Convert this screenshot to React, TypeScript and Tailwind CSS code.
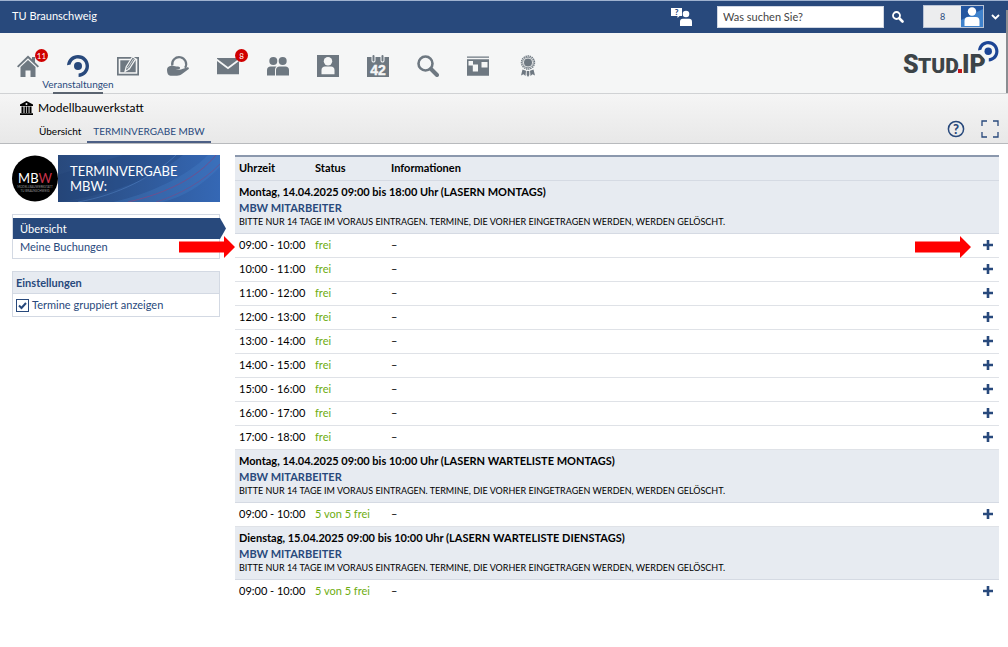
import { Fragment, type ReactNode } from "react";

const SLOTS_MONDAY = [
  "09:00 - 10:00",
  "10:00 - 11:00",
  "11:00 - 12:00",
  "12:00 - 13:00",
  "13:00 - 14:00",
  "14:00 - 15:00",
  "15:00 - 16:00",
  "16:00 - 17:00",
  "17:00 - 18:00",
];

const NOTE =
  "BITTE NUR 14 TAGE IM VORAUS EINTRAGEN. TERMINE, DIE VORHER EINGETRAGEN WERDEN, WERDEN GELÖSCHT.";

const GROUPS = [
  {
    title: "Montag, 14.04.2025 09:00 bis 18:00 Uhr (LASERN MONTAGS)",
    status: "frei",
    slots: SLOTS_MONDAY,
  },
  {
    title: "Montag, 14.04.2025 09:00 bis 10:00 Uhr (LASERN WARTELISTE MONTAGS)",
    status: "5 von 5 frei",
    slots: ["09:00 - 10:00"],
  },
  {
    title:
      "Dienstag, 15.04.2025 09:00 bis 10:00 Uhr (LASERN WARTELISTE DIENSTAGS)",
    status: "5 von 5 frei",
    slots: ["09:00 - 10:00"],
  },
];

const Icon = ({ children }: { children: ReactNode }) => (
  <svg
    viewBox="0 0 22 22"
    className="size-[22px]"
    fill="currentColor"
    aria-hidden="true"
  >
    {children}
  </svg>
);

const Swirl = () => (
  <>
    <circle cx="11" cy="11" r="4" />
    <path d="M0 10.2C.6 4 5.2 0 11 0c6.200 0 11 4.900 11 11 0 6.200-4.500 10.600-10.400 11v-3.400c4-.5 7-3.500 7-7.600 0-4.300-3.300-7.600-7.600-7.600-3.800 0-6.600 2.500-7.400 6.100z" />
  </>
);

const NAV_ITEMS: {
  label: string;
  icon: ReactNode;
  badge?: string;
  active?: boolean;
}[] = [
  {
    label: "Start",
    badge: "11",
    icon: (
      <>
        <path d="M11 .5 15 4.300V2h3v5.200l4 4-1.300 1.300L11 3.300 1.300 12.500 0 11.200z" />
        <path d="M11 5 18.500 12v10h-5v-6.500h-5V22h-5V12z" />
      </>
    ),
  },
  { label: "Veranstaltungen", active: true, icon: <Swirl /> },
  {
    label: "Inhalte",
    icon: (
      <>
        <path d="M0 2h22v18.500H0zm1.700 1.700v15.100h18.600V3.700z" fillRule="evenodd" />
        <path d="M3.300 5.300h15.400v11.900H3.300z" />
        <path
          d="M8 16.500 9.200 11.800 15.500 1.800l3.200 2.100-6.300 10z"
          stroke="#f5f6f6"
          strokeWidth="1.200"
        />
        <path d="m9.500 12 3 2M11 12.500l5.500-8.500" stroke="#f5f6f6" strokeWidth=".7" fill="none" />
      </>
    ),
  },
  {
    label: "Kurse",
    icon: (
      <>
        <path
          d="M5.300 10.500a7 7 0 1 1 12.800 2.300"
          fill="none"
          stroke="currentColor"
          strokeWidth="2.200"
        />
        <path d="M0 15c0-3 2.500-4.300 5.500-4.300 2.300 0 3 .8 5.500.9 2 .1 2.500 1.400 1.700 2.200-.7.600-2 .5-4.200.4 3 .9 5.500.4 7.500-.5l4-1.300c1.300-.3 2.300.6 1.700 1.700L15 19c-1.500 1.200-3 1.700-5 1.700H3.500C1.300 20.700 0 18.500 0 15z" />
      </>
    ),
  },
  {
    label: "Nachrichten",
    badge: "8",
    icon: (
      <>
        <path d="M0 3h22v.8L11 12 0 3.800z" />
        <path d="m0 6 11 8.200L22 6v13.300H0z" />
      </>
    ),
  },
  {
    label: "Community",
    icon: (
      <>
        <circle cx="6.300" cy="6" r="4" />
        <circle cx="15.700" cy="6" r="4" />
        <path d="M0 20.500v-5.500C0 13 1.500 11.500 3.500 11.500h6c-1 1-1.500 2-1.500 3.500v5.500zM9 20.500v-5.500c0-2 1.500-3.500 3.500-3.500h6c2 0 3.500 1.500 3.500 3.500v5.500z" />
      </>
    ),
  },
  {
    label: "Profil",
    icon: (
      <>
        <path d="M0 0h22v22H0z" />
        <circle cx="11" cy="6.300" r="4.200" fill="#f5f6f6" />
        <path
          d="M4.500 19.300v-4.300c0-2.200 1.500-3.500 3.500-3.500h6c2 0 3.500 1.300 3.500 3.500v4.300z"
          fill="#f5f6f6"
        />
      </>
    ),
  },
  {
    label: "Planer",
    icon: (
      <>
        <path d="M0 2h4.500v3.500c0 2.700 4 2.700 4 0V2h5v3.500c0 2.700 4 2.700 4 0V2H22v20H0z" />
        <path
          d="M6.500 1v4.500M15.500 1v4.500"
          stroke="currentColor"
          strokeWidth="2"
          strokeLinecap="round"
        />
        <text
          x="11"
          y="19.500"
          textAnchor="middle"
          fill="#f5f6f6"
          stroke="#f5f6f6"
          strokeWidth=".4"
          className="font-['Liberation_Sans',sans-serif] text-[14px] font-bold"
        >
          42
        </text>
      </>
    ),
  },
  {
    label: "Suche",
    icon: (
      <>
        <circle
          cx="8.500"
          cy="8.500"
          r="7"
          fill="none"
          stroke="currentColor"
          strokeWidth="2.600"
        />
        <path
          d="m14 14 6 6"
          stroke="currentColor"
          strokeWidth="4"
          strokeLinecap="round"
        />
      </>
    ),
  },
  {
    label: "Tools",
    icon: (
      <>
        <path d="M0 1.600h22v1.200H0zM0 4.300h22v16.400H0z" />
        <path
          d="M1.500 6H6v3.500h5v7H5.800v-6H1.500zM14.500 7h6v5.500h-6z"
          fill="#f5f6f6"
        />
      </>
    ),
  },
  {
    label: "Badges",
    icon: (
      <>
        <circle
          cx="11"
          cy="7.500"
          r="6.500"
          fill="none"
          stroke="currentColor"
          strokeWidth="1.400"
          strokeDasharray="1.400 .7"
        />
        <circle cx="11" cy="7.500" r="5.300" fill="none" stroke="currentColor" strokeWidth=".8" />
        <circle cx="11" cy="7.500" r="4" />
        <path d="m5.500 14.500 3.500 1.300L8.500 21l-2-1.800L4 20.500zM16.500 14.500 13 15.800l.5 5.200 2-1.800 2.500 1.300zM9.700 16h2.600v4L11 22l-1.300-2z" />
      </>
    ),
  },
];

const TopBar = () => (
  <div className="flex h-[33px] items-center border-t border-[#9fb2cf] bg-[#28497c] pr-2 pb-px pl-3 text-white">
    <span className="text-[11px]">TU Braunschweig</span>
    <button type="button" aria-label="Hilfe" className="mr-6 ml-auto">
      <svg viewBox="0 0 22 18" className="h-[18px] w-[22px] overflow-visible" fill="white">
        <path d="M0 0h11v8H8.500l-2 2V8H0z" />
        <text
          x="5.500"
          y="7"
          textAnchor="middle"
          fill="#28497c"
          className="text-[8px] font-black"
        >
          ?
        </text>
        <circle cx="15" cy="6" r="3.300" />
        <path d="M9 18v-4.500c0-1.700 1-2.800 2.800-2.800h6.400c1.800 0 2.800 1.100 2.800 2.800V18z" />
      </svg>
    </button>
    <input
      type="search"
      aria-label="Suche"
      placeholder="Was suchen Sie?"
      className="h-[22px] w-[167px] border border-[#d0d7e3] bg-white px-[5px] text-[11px] text-black placeholder:text-[#444]"
    />
    <button type="button" aria-label="Suchen" className="ml-2">
      <svg viewBox="0 0 12 12" className="size-3" fill="none" stroke="white">
        <circle cx="4.500" cy="4.500" r="3.500" strokeWidth="1.800" />
        <path d="m7.500 7.500 3 3" strokeWidth="2.600" strokeLinecap="round" />
      </svg>
    </button>
    <div className="ml-[19px] flex h-[23px] border border-[#b9c3d5]">
      <button
        type="button"
        className="w-[37px] bg-[#ecedee] text-[9px] text-[#28497c]"
      >
        8
      </button>
      <svg viewBox="0 0 22 21" className="h-[21px] w-[22px]">
        <path d="M0 0h22v21H0z" fill="#2456a0" />
        <path d="M0 14 22 3v18H0z" fill="#3f82cc" />
        <circle cx="11" cy="5.500" r="4.200" fill="white" />
        <path
          d="M3.500 20v-5c0-2.500 1.300-4 3.500-4h8c2.200 0 3.500 1.500 3.500 4v5z"
          fill="white"
        />
      </svg>
    </div>
    <button type="button" aria-label="Profilmenü" className="ml-[7px]">
      <svg viewBox="0 0 9 6" className="h-[6px] w-[9px]" fill="none">
        <path d="m1 1 3.500 3.500L8 1" stroke="white" strokeWidth="1.800" />
      </svg>
    </button>
  </div>
);

const Logo = () => (
  <svg
    viewBox="0 0 96 36"
    className="h-9 w-24 overflow-visible"
    role="img"
    aria-label="Stud.IP"
  >
    <g
      fill="#3c4448"
      className="font-[Roboto,sans-serif] text-[25px] font-black"
    >
      <text x="-1" y="33">
        S
      </text>
      <text x="14" y="33" className="text-[21px]">
        TUD
      </text>
      <text x="58" y="33">
        IP
      </text>
    </g>
    <path d="M54 29h4v4h-4z" fill="#c4161c" />
    <g fill="#1c4595" transform="translate(74 1) scale(.93)">
      <path d="M0 10.2C.6 4 5.200 0 11 0v22z" fill="#f5f6f6" stroke="#f5f6f6" strokeWidth="2" />
      <Swirl />
    </g>
  </svg>
);

const MainNav = () => (
  <div className="flex h-[61px] justify-between border-b border-[#d0d2d4] bg-[#f5f6f6] pr-2 pl-[3px]">
    <nav className="flex">
      {NAV_ITEMS.map(({ label, icon, badge, active }) => (
        <a
          key={label}
          href="#"
          aria-label={label}
          className={
            active
              ? "relative flex h-[61px] w-[50px] flex-col items-center border-b-2 border-[#5b6470] pt-[22px] text-[#28497c]"
              : "relative flex h-[61px] w-[50px] flex-col items-center pt-[22px] text-[#6e7881]"
          }
        >
          <Icon>{icon}</Icon>
          {active && (
            <span className="text-[10px] leading-[15px] whitespace-nowrap">
              {label}
            </span>
          )}
          {badge && (
            <span className="absolute top-4 left-8 flex size-[13px] items-center justify-center rounded-full bg-[#d00000] text-[8px] text-white">
              {badge}
            </span>
          )}
        </a>
      ))}
    </nav>
    <div className="pt-[7px]">
      <Logo />
    </div>
  </div>
);

const ContextBar = () => (
  <div className="flex h-[50px] items-end justify-between border-b border-[#b8babd] bg-linear-to-b from-[#f5f5f5] to-[#e8e8e8] pr-[9px] pl-5">
    <div>
      <div className="flex items-center gap-[5px] pb-[5px] text-[12px] leading-4">
        <svg viewBox="0 0 13 14" className="h-[14px] w-[13px]">
          <path d="M6.500 0 13 3.500V5H0V3.500zM1.500 5.500h2V12h-2zM4.500 5.500h1.700V12H4.500zM6.900 5.500h1.700V12H6.900zM9.500 5.500h2V12h-2zM0 12.300h13V14H0z" />
          <circle cx="6.500" cy="3" r="1" fill="#f2f2f2" />
        </svg>
        Modellbauwerkstatt
      </div>
      <nav className="flex pl-[13px] text-[10px] leading-5">
        <a href="#" className="px-[6px]">
          Übersicht
        </a>
        <a
          href="#"
          className="border-b-2 border-[#4c5f85] px-[6px] text-[#28497c]"
        >
          TERMINVERGABE MBW
        </a>
      </nav>
    </div>
    <div className="flex gap-4 pb-[5px] text-[#28497c]">
      <button type="button" aria-label="Hilfe">
        <svg viewBox="0 0 18 18" className="size-[18px]">
          <circle
            cx="9"
            cy="9"
            r="7.600"
            fill="none"
            stroke="currentColor"
            strokeWidth="1.500"
          />
          <text
            x="9"
            y="13.500"
            textAnchor="middle"
            fill="currentColor"
            className="text-[13px] font-black"
          >
            ?
          </text>
        </svg>
      </button>
      <button type="button" aria-label="Vollbild">
        <svg
          viewBox="0 0 18 18"
          className="size-[18px]"
          fill="none"
          stroke="currentColor"
          strokeWidth="1.300"
        >
          <path d="M1 6V1h5M12 1h5v5M17 12v5h-5M6 17H1v-5" />
        </svg>
      </button>
    </div>
  </div>
);

const Sidebar = () => (
  <aside className="w-[208px] shrink-0 text-[11px] text-[#28497c]">
    <div className="flex h-[47px]">
      <svg viewBox="0 0 46 46" className="h-[47px] w-[46px] shrink-0">
        <circle cx="23" cy="23" r="23" />
        <text
          x="23"
          y="27"
          textAnchor="middle"
          fill="white"
          className="text-[13px]"
        >
          MB<tspan fill="#c8324b">W</tspan>
        </text>
        <g fill="#999" textAnchor="middle" className="text-[3px]">
          <text x="23" y="32">
            MODELLBAUWERKSTATT
          </text>
          <text x="23" y="36">
            TU BRAUNSCHWEIG
          </text>
        </g>
      </svg>
      <div className="relative flex-1 overflow-hidden bg-linear-to-r from-[#28497c] to-[#3568b5]">
        <svg
          viewBox="0 0 162 47"
          preserveAspectRatio="none"
          className="absolute inset-0 size-full"
          fill="none"
        >
          <path d="M55 47C95 38 130 20 150 0h12v12C145 30 125 42 105 47z" fill="#4b86d0" opacity=".25" />
          <path d="M0 20C30 10 50 5 65 0h60C95 25 50 40 0 47z" fill="#1d3b70" opacity=".25" />
          <path d="M70 47C110 38 140 22 158 0" stroke="#7c4a86" opacity=".8" />
          <path d="M98 47c25-8 46-20 64-38" stroke="#7c4a86" opacity=".6" />
          <path d="M20 47C60 40 95 22 118 0" stroke="#5c8fd0" opacity=".4" />
        </svg>
        <h1 className="relative pt-[9px] pl-3 text-[13px] leading-[15px] text-white">
          TERMINVERGABE
          <br />
          MBW:
        </h1>
      </div>
    </div>

    <nav className="mt-3 border border-[#d3d9e3] py-[3px]">
      <a
        href="#"
        className="relative block h-[21px] bg-[#28497c] pl-[7px] leading-[21px] text-white"
      >
        Übersicht
        <svg
          viewBox="0 0 7 21"
          className="absolute top-0 -right-[7px] h-[21px] w-[7px]"
        >
          <path d="M0 0h1l6 10.500L1 21H0z" fill="#28497c" />
        </svg>
      </a>
      <a href="#" className="block pl-[7px] leading-4">
        Meine Buchungen
      </a>
    </nav>

    <section className="mt-3 border border-[#d3d9e3]">
      <h2 className="border-b border-[#d3d9e3] bg-[#e7ebf1] pl-[3px] leading-[21px] font-bold">
        Einstellungen
      </h2>
      <label className="flex h-[22px] items-center gap-[3px] pl-[3px]">
        <input
          type="checkbox"
          defaultChecked
          className="peer size-[13px] appearance-none border border-[#28497c] bg-white"
        />
        <svg
          viewBox="0 0 13 13"
          className="invisible -ml-4 size-[13px] peer-checked:visible"
          fill="none"
        >
          <path d="m3 6.500 2.500 2.500L10 4" stroke="#28497c" strokeWidth="2" />
        </svg>
        Termine gruppiert anzeigen
      </label>
    </section>
  </aside>
);

const Arrow = () => (
  <svg viewBox="0 0 56 22" className="h-[22px] w-14" fill="#ff0000">
    <path d="M0 5.500h45V0l11 11-11 11v-5.500H0z" />
  </svg>
);

const BookingTable = () => (
  <table className="w-full flex-1 border-collapse text-left text-[11px]">
    <thead>
      <tr className="h-6 border-t-2 border-b border-t-[#8b98ad] border-b-[#d5dae3] bg-[#e7ebf1]">
        <th className="w-[76px] pl-1 font-bold">Uhrzeit</th>
        <th className="w-[76px] pl-1 font-bold">Status</th>
        <th className="pl-1 font-bold">Informationen</th>
        <th className="w-[90px]" aria-label="Aktionen" />
      </tr>
    </thead>
    <tbody>
      {GROUPS.map(({ title, status, slots }, groupIndex) => (
        <Fragment key={title}>
          <tr className="border-b border-[#d5dae3] bg-[#e7ebf1]">
            <th colSpan={4} className="px-1 pt-[3px] pb-1 font-normal">
              <div className="leading-4 font-bold">{title}</div>
              <a href="#" className="block leading-[15px] font-bold text-[#28497c]">
                MBW MITARBEITER
              </a>
              <div className="text-[9px] leading-[14px]">{NOTE}</div>
            </th>
          </tr>
          {slots.map((slot, index) => {
            const isMarked = groupIndex === 0 && index === 0;

            return (
              <tr
                key={slot}
                className="h-6 border-b border-[#dfe2e7] last:border-b-0"
              >
                <td className="relative pl-1 whitespace-nowrap">
                  {slot}
                  {isMarked && (
                    <span className="absolute top-[2px] right-full">
                      <Arrow />
                    </span>
                  )}
                </td>
                <td className="pl-1 whitespace-nowrap text-[#6ead10]">
                  {status}
                </td>
                <td className="pl-1">–</td>
                <td className="relative pr-[6px] text-right">
                  {isMarked && (
                    <span className="absolute top-[2px] right-7">
                      <Arrow />
                    </span>
                  )}
                  <button
                    type="button"
                    aria-label={`${slot} buchen`}
                    className="ml-auto block"
                  >
                    <svg
                      viewBox="0 0 10 10"
                      className="size-[10px]"
                      stroke="#28497c"
                      strokeWidth="2.600"
                    >
                      <path d="M5 0v10M0 5h10" />
                    </svg>
                  </button>
                </td>
              </tr>
            );
          })}
        </Fragment>
      ))}
    </tbody>
  </table>
);

const App = () => (
  <div className="relative bg-white font-[Lato,sans-serif] text-black">
    <header>
      <TopBar />
      <MainNav />
      <ContextBar />
    </header>
    <div className="absolute top-[10px] right-0 h-[83px] w-[2px] bg-[#8a8d91]" />
    <main className="flex items-start gap-[15px] pt-[11px] pr-[9px] pb-10 pl-3">
      <Sidebar />
      <BookingTable />
    </main>
  </div>
);

export default App;
